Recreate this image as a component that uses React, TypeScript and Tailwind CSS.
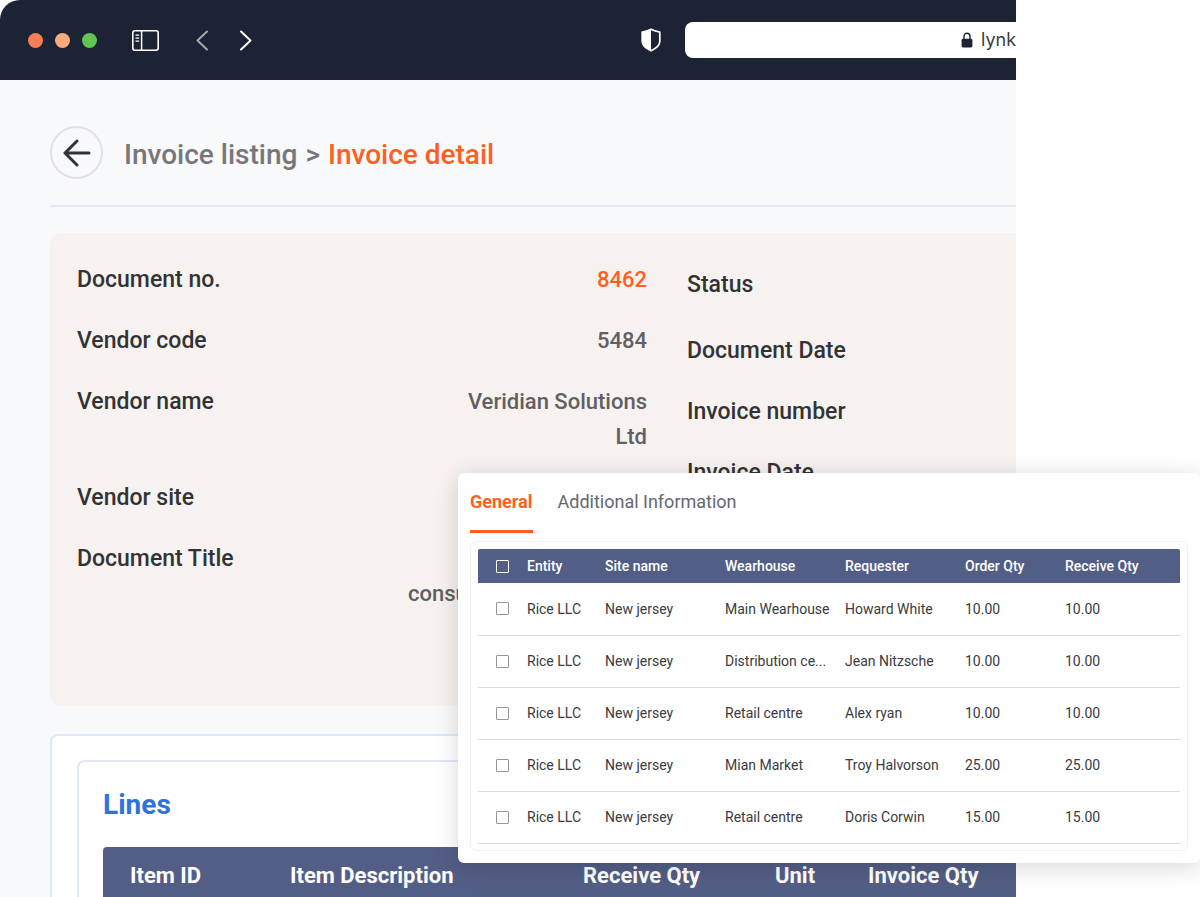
import type { FC, ReactNode } from "react";

interface Field {
  label: string;
  value?: ReactNode;
  valueClass?: string;
}

const documentFields: Field[] = [
  { label: "Document no.", value: "8462", valueClass: "w-[200px] text-right text-[#ff5f22]" },
  { label: "Vendor code", value: "5484", valueClass: "w-[200px] text-right text-[#5f6063]" },
  {
    label: "Vendor name",
    value: "Veridian Solutions Ltd",
    valueClass: "w-[200px] text-right text-[#5f6063]",
  },
  { label: "Vendor site" },
  {
    label: "Document Title",
    value: (
      <>
        <br />
        consultation
      </>
    ),
    valueClass: "w-[239px] text-left text-[#5f6063]",
  },
];

const dateFields = ["Document Date", "Invoice number", "Invoice Date"];

const siteRows = [
  { entity: "Rice LLC", site: "New jersey", wearhouse: "Main Wearhouse", requester: "Howard White", order: "10.00", receive: "10.00" },
  { entity: "Rice LLC", site: "New jersey", wearhouse: "Distribution ce...", requester: "Jean Nitzsche", order: "10.00", receive: "10.00" },
  { entity: "Rice LLC", site: "New jersey", wearhouse: "Retail centre", requester: "Alex ryan", order: "10.00", receive: "10.00" },
  { entity: "Rice LLC", site: "New jersey", wearhouse: "Mian Market", requester: "Troy Halvorson", order: "25.00", receive: "25.00" },
  { entity: "Rice LLC", site: "New jersey", wearhouse: "Retail centre", requester: "Doris Corwin", order: "15.00", receive: "15.00" },
];

export default function App() {
  return (
    <div className="relative h-screen overflow-hidden bg-white font-['Roboto','Liberation_Sans',sans-serif]">
      <div className="mr-[184px] flex h-full flex-col overflow-hidden rounded-tl-[20px] bg-[#f8f9fb]">
        <BrowserBar />
        <main className="pl-[50px]">
          <Breadcrumb />
          <InvoiceSummary />
          <LinesCard />
        </main>
      </div>
      <DetailPopup />
    </div>
  );
}

const BrowserBar: FC = () => {
  return (
    <header className="flex h-20 shrink-0 items-center bg-[#1b2335] pl-7">
      <div className="flex gap-3">
        <span className="size-[15px] rounded-full bg-[#f97d57]" />
        <span className="size-[15px] rounded-full bg-[#fbaa7a]" />
        <span className="size-[15px] rounded-full bg-[#61c454]" />
      </div>
      <button aria-label="Toggle sidebar" className="ml-[35px]">
        <SidebarIcon />
      </button>
      <button aria-label="Back" className="ml-9">
        <ChevronIcon className="text-[#a9a7a5]" d="M12 1.5 2.5 10.5 12 19.5" />
      </button>
      <button aria-label="Forward" className="ml-[30px]">
        <ChevronIcon className="text-white" d="M2 1.5 11.5 10.5 2 19.5" />
      </button>
      <div className="flex-1" />
      <ShieldIcon />
      <label className="ml-6 flex h-9 w-[331px] items-center overflow-hidden rounded-l-lg bg-white pl-[276px]">
        <LockIcon />
        <input
          aria-label="Address"
          readOnly
          value="lynka"
          className="ml-2 w-16 shrink-0 bg-transparent font-['Inter',sans-serif] text-lg leading-6 text-[#3c3d40] outline-none"
        />
      </label>
    </header>
  );
};

const Breadcrumb: FC = () => {
  return (
    <nav className="flex items-center gap-[21px] border-b-2 border-[#e3e9f3] pt-[46px] pb-[26px]">
      <button
        aria-label="Go back"
        className="flex size-[53px] items-center justify-center rounded-full border-2 border-[#e2e0e2]"
      >
        <ArrowLeftIcon />
      </button>
      <div className="flex gap-2 pt-1 text-[28px] leading-9 font-medium whitespace-nowrap">
        <a href="#listing" className="text-[#77777a]">
          Invoice listing
        </a>
        <span className="text-[#77777a]">&gt;</span>
        <span className="text-[#ff5f22]">Invoice detail</span>
      </div>
    </nav>
  );
};

const InvoiceSummary: FC = () => {
  return (
    <section className="mt-[26px] flex gap-10 rounded-l-xl bg-[#f7f2f0] pt-[29px] pb-[95px] pl-[27px] text-[23px] leading-[35px] font-medium">
      <dl className="flex w-[570px] shrink-0 flex-col gap-[26px]">
        {documentFields.map((field) => (
          <div key={field.label} className="flex justify-between">
            <dt className="text-[#323335]">{field.label}</dt>
            <dd className={`text-[22px] ${field.valueClass ?? ""}`}>{field.value}</dd>
          </div>
        ))}
      </dl>
      <dl className="flex flex-1 flex-col gap-[26px] whitespace-nowrap text-[#323335]">
        <dt className="leading-[45px]">Status</dt>
        {dateFields.map((label) => (
          <dt key={label}>{label}</dt>
        ))}
      </dl>
    </section>
  );
};

const LinesCard: FC = () => {
  return (
    <section className="mt-7 rounded-tl-lg border-t-2 border-l-2 border-[#dfe9f5] bg-white pt-6 pl-[25px]">
      <div className="rounded-tl-lg border-t-2 border-l-2 border-[#dfe9f5] pt-[23px] pl-6">
        <h2 className="text-[28px] leading-10 font-bold text-[#2f73da]">Lines</h2>
        <table className="mt-[22px] w-full table-fixed rounded-tl-sm bg-[#535e86] text-left text-[22px] font-bold text-white">
          <thead>
            <tr className="h-14 whitespace-nowrap">
              <th className="w-40 pl-[27px]">Item ID</th>
              <th className="w-[293px] pl-[27px]">Item Description</th>
              <th className="w-48 pl-[27px]">Receive Qty</th>
              <th className="w-[93px] pl-[27px]">Unit</th>
              <th className="pl-[27px]">Invoice Qty</th>
            </tr>
          </thead>
        </table>
      </div>
    </section>
  );
};

const DetailPopup: FC = () => {
  return (
    <section className="absolute top-[473px] right-0 left-[458px] rounded-md bg-white px-3 pb-3 shadow-[0_4px_24px_rgba(0,0,0,0.16)]">
      <div role="tablist" className="flex gap-[25px] text-lg leading-6">
        <button
          role="tab"
          aria-selected="true"
          className="border-b-3 border-[#ff5f22] pt-[17px] pb-4 font-bold text-[#ff5f22]"
        >
          General
        </button>
        <button
          role="tab"
          aria-selected="false"
          className="border-b-3 border-transparent pt-[17px] pb-4 text-[#66676a]"
        >
          Additional Information
        </button>
      </div>
      <div className="mt-2 rounded-md border border-[#f1f1f3] px-[7px] pt-[7px] pb-1.5">
        <table className="w-full table-fixed text-left text-sm whitespace-nowrap text-[#3a3b3e]">
          <thead className="bg-[#535e86] text-white">
            <tr className="h-[34px]">
              <th className="w-[49px] rounded-tl-xs pl-[18px]">
                <Checkbox label="Select all rows" className="border-white" />
              </th>
              <th className="w-[78px] font-medium">Entity</th>
              <th className="w-[120px] font-medium">Site name</th>
              <th className="w-[120px] font-medium">Wearhouse</th>
              <th className="w-[120px] font-medium">Requester</th>
              <th className="w-[100px] font-medium">Order Qty</th>
              <th className="rounded-tr-xs font-medium">Receive Qty</th>
            </tr>
          </thead>
          <tbody>
            {siteRows.map((row, i) => (
              <tr key={i} className="h-[52px] border-b border-[#dcdcde]">
                <td className="pl-[18px]">
                  <Checkbox label={`Select row ${i + 1}`} className="border-[#97979a]" />
                </td>
                <td>{row.entity}</td>
                <td>{row.site}</td>
                <td>{row.wearhouse}</td>
                <td>{row.requester}</td>
                <td>{row.order}</td>
                <td>{row.receive}</td>
              </tr>
            ))}
          </tbody>
        </table>
      </div>
    </section>
  );
};

const Checkbox: FC<{ label: string; className: string }> = ({ label, className }) => {
  return (
    <input
      type="checkbox"
      aria-label={label}
      className={`block size-[13px] appearance-none rounded-[1px] border ${className}`}
    />
  );
};

const SidebarIcon = () => (
  <svg width="27" height="21" viewBox="0 0 27 21" fill="none" stroke="white">
    <rect x="0.8" y="0.8" width="25.4" height="19.4" rx="2.2" strokeWidth="1.6" />
    <path d="M9.6 1v19" strokeWidth="1.5" />
    <path d="M3.5 5.2h3.6M3.5 8.2h3.6M3.5 11.2h3.6" strokeWidth="1.2" />
  </svg>
);

const ChevronIcon: FC<{ d: string; className: string }> = ({ d, className }) => (
  <svg
    width="14"
    height="21"
    viewBox="0 0 14 21"
    fill="none"
    stroke="currentColor"
    strokeWidth="2"
    strokeLinecap="round"
    strokeLinejoin="round"
    className={className}
  >
    <path d={d} />
  </svg>
);

const ShieldIcon = () => (
  <svg width="20" height="24" viewBox="0 0 20 24" fill="none">
    <path
      d="M10 1.2c2.4 1.4 5.3 2.2 8.8 3v9.3c0 4.2-3.8 6.9-8.8 9.3-5-2.4-8.8-5.1-8.8-9.3V4.2c3.5-.8 6.4-1.6 8.8-3z"
      stroke="white"
      strokeWidth="1.7"
      strokeLinejoin="round"
    />
    <path d="M10 1.2v21.6c-5-2.4-8.8-5.1-8.8-9.3V4.2c3.5-.8 6.4-1.6 8.8-3z" fill="white" />
  </svg>
);

const LockIcon = () => (
  <svg width="12" height="16" viewBox="0 0 12 16" fill="none" className="shrink-0">
    <path d="M3 7.5V4.3a3 3 0 0 1 6 0v3.2" stroke="#1b2335" strokeWidth="1.4" />
    <rect x="0.6" y="6.8" width="10.8" height="8.7" rx="1.4" fill="#1b2335" />
  </svg>
);

const ArrowLeftIcon = () => (
  <svg
    width="28"
    height="28"
    viewBox="0 0 28 28"
    fill="none"
    stroke="#323335"
    strokeWidth="3"
    strokeLinecap="round"
    strokeLinejoin="round"
  >
    <path d="M26 14H2M14 2 2 14l12 12" />
  </svg>
);
